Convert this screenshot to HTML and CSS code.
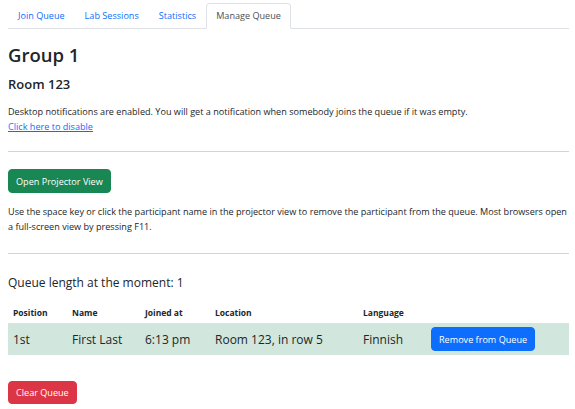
FILE: index.html
```html
<!DOCTYPE html>
<html>
<head>
<meta charset="utf-8">
<link rel="stylesheet" href="styles.css">
</head>
<body>
<div class="page">
  <nav class="tabs">
    <a class="tab" href="#">Join Queue</a>
    <a class="tab" href="#">Lab Sessions</a>
    <a class="tab" href="#">Statistics</a>
    <a class="tab active" href="#">Manage Queue</a>
  </nav>
  <h2 class="title">Group 1</h2>
  <h4 class="room">Room 123</h4>
  <p class="note">Desktop notifications are enabled. You will get a notification when somebody joins the queue if it was empty.<br><a class="link" href="#">Click here to disable</a></p>
  <hr class="rule first">
  <button class="btn btn-green">Open Projector View</button>
  <p class="note help">Use the space key or click the participant name in the projector view to remove the participant from the queue. Most browsers open a full-screen view by pressing F11.</p>
  <hr class="rule second">
  <p class="qlen">Queue length at the moment: 1</p>
  <table class="queue">
    <thead>
      <tr>
        <th class="c-pos">Position</th>
        <th class="c-name">Name</th>
        <th class="c-time">Joined at</th>
        <th class="c-loc">Location</th>
        <th class="c-lang">Language</th>
        <th class="c-act"></th>
      </tr>
    </thead>
    <tbody>
      <tr class="row-success">
        <td>1st</td>
        <td>First Last</td>
        <td>6:13 pm</td>
        <td>Room 123, in row 5</td>
        <td>Finnish</td>
        <td><button class="btn btn-blue">Remove from Queue</button></td>
      </tr>
    </tbody>
  </table>
  <button class="btn btn-red">Clear Queue</button>
</div>
</body>
</html>
```

FILE: styles.css
```css
* { box-sizing: border-box; }
html, body { margin: 0; padding: 0; background: #fff; }
body {
  font-family: "Open Sans", "Noto Sans", sans-serif;
  font-size: 9.1px;
  line-height: 15px;
  color: #212529;
}
.page { padding: 3px 6px 0 8px; }

.tabs {
  display: flex;
  border-bottom: 1px solid #dee2e6;
  height: 26px;
}
.tab {
  display: block;
  padding: 4px 9px 5px;
  border: 1px solid transparent;
  border-top-left-radius: 4px;
  border-top-right-radius: 4px;
  margin-bottom: -1px;
  color: #0d6efd;
  text-decoration: none;
  line-height: 15px;
}
.tab.active {
  color: #495057;
  background: #fff;
  border-color: #dee2e6 #dee2e6 #fff;
}

.title {
  margin: 14px 0 0;
  font-size: 18.5px;
  line-height: 24px;
  font-weight: 600;
}
.room {
  margin: 9px 0 0;
  font-size: 13px;
  line-height: 17px;
  font-weight: 600;
}
.note { margin: 11px 0 0; }
.link { color: #0d6efd; text-decoration: underline; }

.rule {
  border: 0;
  border-top: 1px solid #d3d4d5;
  margin: 0;
}
.rule.first { margin-top: 17px; }
.rule.second { margin-top: 19px; }

.btn {
  display: inline-block;
  font-family: inherit;
  font-size: 9.1px;
  line-height: 15px;
  padding: 3.5px 7px;
  border: 1px solid transparent;
  border-radius: 4px;
  color: #fff;
  cursor: pointer;
}
.btn-green { background: #198754; border-color: #198754; margin-top: 17px; display: block; }
.btn-blue { background: #0d6efd; border-color: #0d6efd; }
.btn-red { background: #dc3545; border-color: #dc3545; margin-top: 26px; display: block; padding: 3px 7px; }

.help { margin-top: 11px; }

.qlen {
  margin: 19px 0 0;
  font-size: 12px;
  line-height: 19px;
}

.queue {
  margin-top: 10px;
  width: 100%;
  border-collapse: collapse;
}
.queue th {
  text-align: left;
  font-weight: 700;
  font-size: 8.5px;
  line-height: 13px;
  padding: 4px 5px 4px;
}
.queue td {
  font-size: 12px;
  line-height: 19px;
  padding: 4px 5px;
  vertical-align: middle;
}
.row-success td { background: #d1e7dd; }
.c-pos { width: 59px; }
.c-name { width: 73px; }
.c-time { width: 70px; }
.c-loc { width: 148px; }
.c-lang { width: 68px; }
```
